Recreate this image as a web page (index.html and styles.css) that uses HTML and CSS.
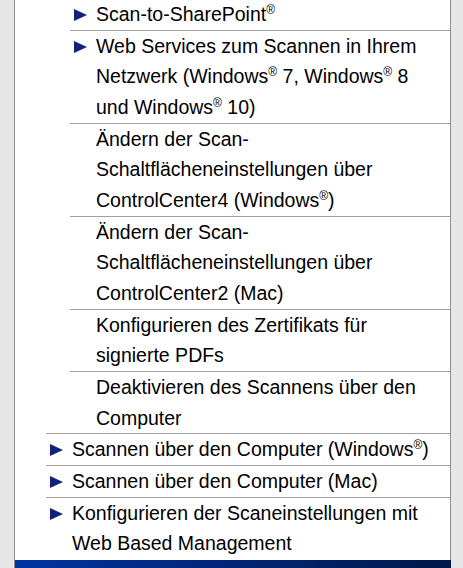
FILE: index.html
```html
<!DOCTYPE html>
<html lang="de">
<head>
<meta charset="utf-8">
<link rel="stylesheet" href="styles.css">
</head>
<body>
<div class="panel">
  <ul class="lvl1">
    <li class="sub">
      <ul class="lvl2">
        <li class="item arrow first"><svg class="tri" viewBox="0 0 13 12"><polygon points="0,0 13,6 0,12"/></svg>Scan-to-SharePoint<sup>®</sup></li>
        <li class="item arrow"><svg class="tri" viewBox="0 0 13 12"><polygon points="0,0 13,6 0,12"/></svg>Web Services zum Scannen in Ihrem Netzwerk (Windows<sup>®</sup> 7, Windows<sup>®</sup> 8 und Windows<sup>®</sup> 10)</li>
        <li class="item">Ändern der Scan-Schaltflächeneinstellungen über ControlCenter4 (Windows<sup>®</sup>)</li>
        <li class="item">Ändern der Scan-Schaltflächeneinstellungen über ControlCenter2 (Mac)</li>
        <li class="item">Konfigurieren des Zertifikats für signierte PDFs</li>
        <li class="item last">Deaktivieren des Scannens über den Computer</li>
      </ul>
    </li>
    <li class="item arrow"><svg class="tri" viewBox="0 0 13 12"><polygon points="0,0 13,6 0,12"/></svg>Scannen über den Computer (Windows<sup>®</sup>)</li>
    <li class="item arrow"><svg class="tri" viewBox="0 0 13 12"><polygon points="0,0 13,6 0,12"/></svg>Scannen über den Computer (Mac)</li>
    <li class="item arrow end"><svg class="tri" viewBox="0 0 13 12"><polygon points="0,0 13,6 0,12"/></svg>Konfigurieren der Scaneinstellungen mit Web Based Management</li>
  </ul>
  <div class="footer"></div>
</div>
</body>
</html>
```

FILE: styles.css
```css
html, body {
  margin: 0;
  padding: 0;
}
body {
  background: #e6e6e6;
  font-family: "Liberation Sans", Arial, sans-serif;
  font-size: 19.5px;
  color: #000;
  height: 568px;
  overflow: hidden;
}
.panel {
  margin-left: 14px;
  width: 435px;
  background: #fff;
  border-left: 1px solid #8e8e8e;
  border-right: 1px solid #8e8e8e;
  margin-top: -1px;
}
ul {
  list-style: none;
  margin: 0;
  padding: 0;
}
.lvl1 {
  margin-left: 31px;
}
.lvl2 {
  margin-left: 24px;
}
.item {
  position: relative;
  padding-left: 26px;
  padding-right: 10px;
  line-height: 30.67px;
  border-bottom: 1px solid #a0a0a0;
}
.lvl2 .item.last {
  margin-left: -24px;
  padding-left: 50px;
}
.item.end {
  border-bottom: none;
  padding-bottom: 1px;
}
.tri {
  position: absolute;
  left: 4px;
  top: 10px;
  width: 13px;
  height: 12px;
  fill: #14207e;
}
sup {
  font-size: 12px;
  line-height: 12px;
  vertical-align: 7px;
}
.footer {
  height: 12px;
  margin-right: -1px;
  background: linear-gradient(to right, #0033a0 0%, #02236e 60%, #001848 100%);
}
```
